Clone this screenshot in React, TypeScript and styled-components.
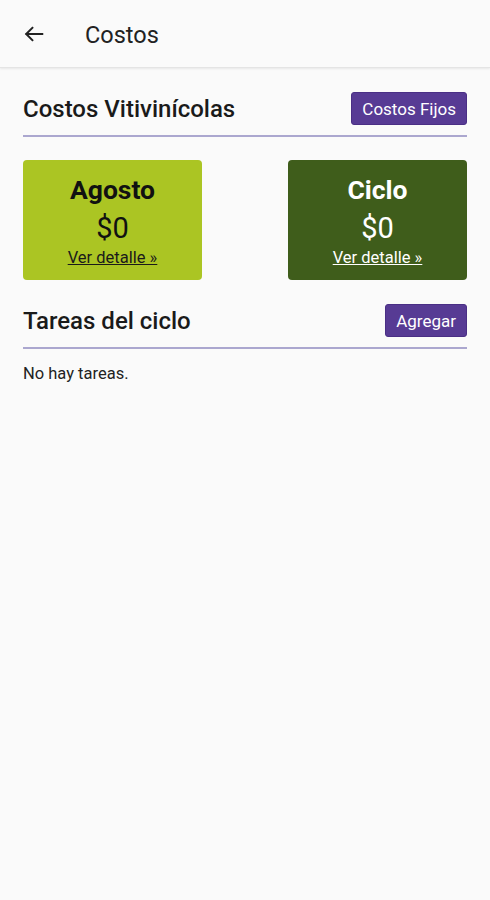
import React from "react";
import styled, { createGlobalStyle } from "styled-components";

const GlobalStyle = createGlobalStyle`
  html, body {
    margin: 0;
    padding: 0;
    background: #fafafa;
    font-family: Roboto, "Liberation Sans", sans-serif;
  }
`;

const Page = styled.div`
  width: 490px;
  min-height: 900px;
  background: #fafafa;
`;

const AppBar = styled.header`
  height: 68px;
  display: flex;
  align-items: center;
  padding: 0 23px;
  background: #fafafa;
  border-bottom: 1px solid #e4e4e4;
  box-shadow: 0 1px 2px rgba(0, 0, 0, 0.08);
  box-sizing: border-box;
`;

const BackButton = styled.button`
  border: none;
  background: none;
  padding: 0;
  width: 22px;
  height: 22px;
  display: flex;
  align-items: center;
  justify-content: center;
  cursor: pointer;
  color: #222;
`;

const Title = styled.h1`
  margin: 2px 0 0 40px;
  font-size: 23.5px;
  font-weight: 400;
  color: #222;
`;

const Content = styled.main`
  padding: 24px 23px 0;
`;

const SectionHeader = styled.div`
  display: flex;
  align-items: center;
  justify-content: space-between;
  padding-bottom: 10px;
  border-bottom: 2px solid #aba7cf;
`;

const SectionTitle = styled.h2`
  margin: 0;
  font-size: 24px;
  font-weight: 500;
  color: #1a1a1a;
`;

const PurpleButton = styled.button`
  background: #573b94;
  color: #fff;
  border: 1px solid #4a2f85;
  border-radius: 3px;
  font-family: Roboto, "Liberation Sans", sans-serif;
  font-size: 17px;
  height: 33px;
  padding: 0 10px;
  cursor: pointer;
`;

const Cards = styled.div`
  display: flex;
  justify-content: space-between;
  margin: 23px 0 24px;
`;

const Card = styled.div<{ $bg: string; $fg: string }>`
  width: 179px;
  height: 120px;
  border-radius: 4px;
  background: ${(p) => p.$bg};
  color: ${(p) => p.$fg};
  display: flex;
  flex-direction: column;
  align-items: center;
  padding-top: 14px;
  box-sizing: border-box;
`;

const CardTitle = styled.div`
  font-size: 26.5px;
  font-weight: 700;
  line-height: 32px;
`;

const CardAmount = styled.div`
  font-size: 29px;
  line-height: 34px;
  margin-top: 5px;
`;

const CardLink = styled.a<{ $fg: string }>`
  font-size: 16.5px;
  color: ${(p) => p.$fg};
  text-decoration: underline;
  line-height: 20px;
  margin-top: 3px;
  cursor: pointer;
`;

const EmptyText = styled.p`
  margin: 15px 0 0;
  font-size: 16.5px;
  line-height: 20px;
  color: #222;
`;

const App: React.FC = () => {
  return (
    <Page>
      <GlobalStyle />
      <AppBar>
        <BackButton aria-label="Volver">
          <svg width="22" height="22" viewBox="0 0 24 24" fill="none" stroke="#222" strokeWidth="2.2" strokeLinecap="square">
            <path d="M21 12H4" />
            <path d="M11 4.5L3.5 12L11 19.5" strokeLinecap="butt" />
          </svg>
        </BackButton>
        <Title>Costos</Title>
      </AppBar>
      <Content>
        <SectionHeader>
          <SectionTitle>Costos Vitivinícolas</SectionTitle>
          <PurpleButton>Costos Fijos</PurpleButton>
        </SectionHeader>
        <Cards>
          <Card $bg="#abc523" $fg="#111">
            <CardTitle>Agosto</CardTitle>
            <CardAmount>$0</CardAmount>
            <CardLink $fg="#1a1a1a">Ver detalle »</CardLink>
          </Card>
          <Card $bg="#3f5d1b" $fg="#fff">
            <CardTitle>Ciclo</CardTitle>
            <CardAmount>$0</CardAmount>
            <CardLink $fg="#fff">Ver detalle »</CardLink>
          </Card>
        </Cards>
        <SectionHeader>
          <SectionTitle>Tareas del ciclo</SectionTitle>
          <PurpleButton>Agregar</PurpleButton>
        </SectionHeader>
        <EmptyText>No hay tareas.</EmptyText>
      </Content>
    </Page>
  );
};

export default App;
